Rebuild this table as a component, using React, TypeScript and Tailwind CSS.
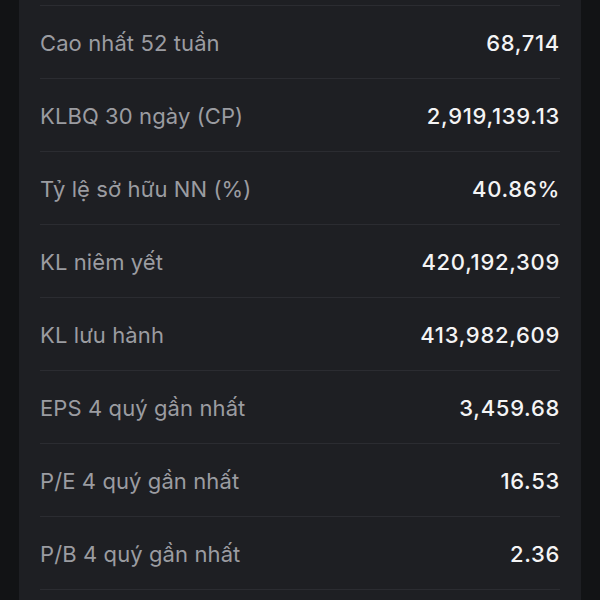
import React from 'react';

// Dòng dữ liệu thống kê cổ phiếu
interface StatRow {
  label: string;
  value: string;
}

const rows: StatRow[] = [
  { label: 'Cao nhất 52 tuần', value: '68,714' },
  { label: 'KLBQ 30 ngày (CP)', value: '2,919,139.13' },
  { label: 'Tỷ lệ sở hữu NN (%)', value: '40.86%' },
  { label: 'KL niêm yết', value: '420,192,309' },
  { label: 'KL lưu hành', value: '413,982,609' },
  { label: 'EPS 4 quý gần nhất', value: '3,459.68' },
  { label: 'P/E 4 quý gần nhất', value: '16.53' },
  { label: 'P/B 4 quý gần nhất', value: '2.36' },
];

const App: React.FC = () => {
  return (
    <div
      className="h-[600px] w-[600px] overflow-hidden bg-[#121315] px-[19px]"
      style={{ fontFamily: 'Inter, "Noto Sans", sans-serif' }}
    >
      <section className="h-full bg-[#1e1f23] px-[21px] pt-[5px]">
        {rows.map((row, index) => (
          <div
            key={index}
            className="flex h-[73px] items-center justify-between border-t border-[#2b2c31] pt-[3px]"
          >
            <span className="text-[22px] tracking-[0.1px] text-[#9b9ca1]">{row.label}</span>
            <span className="text-[22px] font-medium tracking-[0.7px] text-[#f4f4f5]">
              {row.value}
            </span>
          </div>
        ))}
        <div className="border-t border-[#2b2c31]" />
      </section>
    </div>
  );
};

export default App;
